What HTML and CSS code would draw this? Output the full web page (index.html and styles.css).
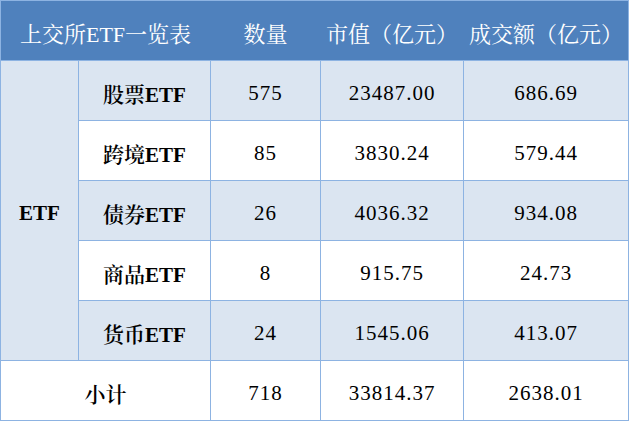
FILE: index.html
```html
<!DOCTYPE html>
<html lang="zh-CN">
<head>
<meta charset="utf-8">
<title>上交所ETF一览表</title>
<link rel="stylesheet" href="styles.css">
</head>
<body>
<div class="table">
  <div class="head">
    <div class="hcell span2">上交所ETF一览表</div>
    <div class="hcell">数量</div>
    <div class="hcell">市值（亿元）</div>
    <div class="hcell">成交额（亿元）</div>
  </div>
  <div class="body">
    <div class="cell band label group">ETF</div>

    <div class="cell band label">股票ETF</div>
    <div class="cell band num">575</div>
    <div class="cell band num">23487.00</div>
    <div class="cell band num">686.69</div>

    <div class="cell label">跨境ETF</div>
    <div class="cell num">85</div>
    <div class="cell num">3830.24</div>
    <div class="cell num">579.44</div>

    <div class="cell band label">债券ETF</div>
    <div class="cell band num">26</div>
    <div class="cell band num">4036.32</div>
    <div class="cell band num">934.08</div>

    <div class="cell label">商品ETF</div>
    <div class="cell num">8</div>
    <div class="cell num">915.75</div>
    <div class="cell num">24.73</div>

    <div class="cell band label">货币ETF</div>
    <div class="cell band num">24</div>
    <div class="cell band num">1545.06</div>
    <div class="cell band num">413.07</div>

    <div class="cell label span2">小计</div>
    <div class="cell num">718</div>
    <div class="cell num">33814.37</div>
    <div class="cell num">2638.01</div>
  </div>
</div>
</body>
</html>
```

FILE: styles.css
```css
html, body {
  margin: 0;
  padding: 0;
  background: #ffffff;
}

.table {
  width: 627px;
  border: 1px solid #8db3e2;
  font-family: "Liberation Serif", "Noto Serif CJK SC", "Noto Sans CJK SC", serif;
}

.head,
.body {
  display: grid;
  grid-template-columns: 77px 131px 109px 142px 164px;
  column-gap: 1px;
}

.head {
  background: #4f81bd;
  height: 59px;
  border-bottom: 1px solid #8db3e2;
}

.hcell {
  display: flex;
  align-items: center;
  justify-content: center;
  padding-top: 4px;
  color: #ffffff;
  font-size: 22px;
  white-space: nowrap;
}

.body {
  grid-template-rows: repeat(6, 59px);
  row-gap: 1px;
  background: #8db3e2;
}

.cell {
  display: flex;
  align-items: center;
  justify-content: center;
  padding-top: 5px;
  background: #ffffff;
  color: #000000;
  font-size: 21px;
  white-space: nowrap;
}

.band {
  background: #dbe5f1;
}

.label {
  font-weight: 600;
}

.num {
  letter-spacing: 1px;
}

.group {
  grid-row: 1 / span 5;
}

.span2 {
  grid-column: span 2;
}
```
